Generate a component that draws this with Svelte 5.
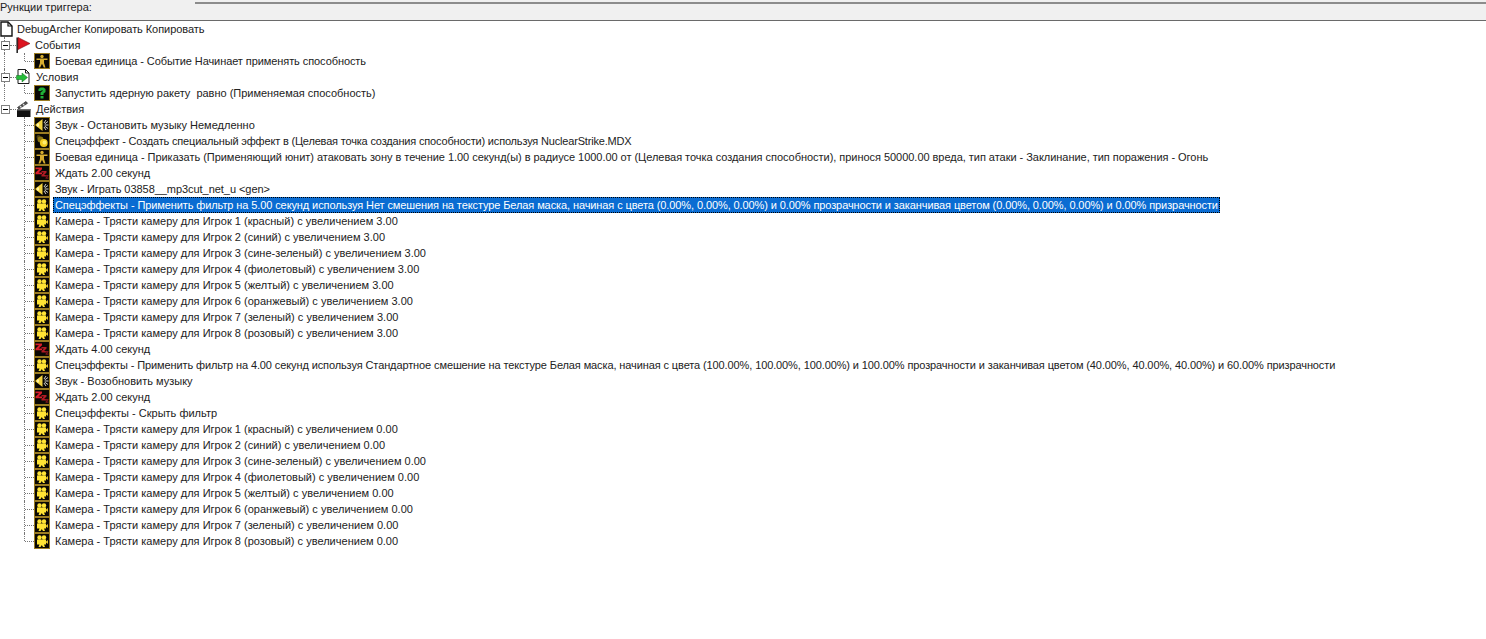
<script>
  const players = ['1 (красный)', '2 (синий)', '3 (сине-зеленый)', '4 (фиолетовый)', '5 (желтый)', '6 (оранжевый)', '7 (зеленый)', '8 (розовый)'];

  const shake = (amount) =>
    players.map((p) => ({
      icon: 'film',
      tight: 'plus',
      text: `Камера - Трясти камеру для Игрок ${p} с увеличением ${amount}`
    }));

  const actions = [
    { icon: 'sound', text: 'Звук - Остановить музыку Немедленно' },
    { icon: 'fx', text: 'Спецэффект - Создать специальный эффект в (Целевая точка создания способности) используя NuclearStrike.MDX', tight: 'max' },
    { icon: 'unit', text: 'Боевая единица - Приказать (Применяющий юнит) атаковать зону в течение 1.00 секунд(ы) в радиусе 1000.00 от (Целевая точка создания способности), принося 50000.00 вреда, тип атаки - Заклинание, тип поражения - Огонь', tight: 'low' },
    { icon: 'wait', text: 'Ждать 2.00 секунд' },
    { icon: 'sound', text: 'Звук - Играть 03858__mp3cut_net_u <gen>', tight: 'soft' },
    { icon: 'film', selected: true, tight: 'sel', text: 'Спецэффекты - Применить фильтр на 5.00 секунд используя Нет смешения на текстуре Белая маска, начиная с цвета (0.00%, 0.00%, 0.00%) и 0.00% прозрачности и заканчивая цветом (0.00%, 0.00%, 0.00%) и 0.00% призрачности' },
    ...shake('3.00'),
    { icon: 'wait', text: 'Ждать 4.00 секунд' },
    { icon: 'film', tight: 'high', text: 'Спецэффекты - Применить фильтр на 4.00 секунд используя Стандартное смешение на текстуре Белая маска, начиная с цвета (100.00%, 100.00%, 100.00%) и 100.00% прозрачности и заканчивая цветом (40.00%, 40.00%, 40.00%) и 60.00% призрачности' },
    { icon: 'sound', text: 'Звук - Возобновить музыку' },
    { icon: 'wait', text: 'Ждать 2.00 секунд' },
    { icon: 'film', text: 'Спецэффекты - Скрыть фильтр' },
    ...shake('0.00')
  ];

  const groups = [
    { label: 'События', icon: 'flag', items: [{ icon: 'unit', text: 'Боевая единица - Событие Начинает применять способность', tight: 'mid' }] },
    { label: 'Условия', icon: 'cond', nudge: true, items: [{ icon: 'quest', text: 'Запустить ядерную ракету  равно (Применяемая способность)', tight: 'faint' }] },
    { label: 'Действия', icon: 'clap', nudge: true, items: actions }
  ];
</script>

{#snippet glyph(name)}
  <svg class="icon" width="16" height="16" viewBox="0 0 16 16">
    <rect x="0.5" y="0.5" width="15" height="15" fill="#0a0804" stroke="#9a7c22" />
    {#if name === 'film'}
      <circle cx="5.500" cy="4.500" r="2.200" fill="#ffe435" />
      <circle cx="10" cy="4.500" r="2.200" fill="#ffe435" />
      <path d="M3 6.500h9v5H10l1 2.500H9L7.800 12 6.500 14H4.500l1-2.500H3z" fill="#ffe435" />
      <path d="M12 8.500l2-1.500v4l-2-1.500z" fill="#e2c22a" />
    {:else if name === 'sound'}
      <path d="M1.500 7.500L8.500 2v12L1.500 8.500z" fill="#f2d23e" />
      <path d="M3 6.500h2v3H3z" fill="#fff2a0" />
      <path d="M10 6l2-3M10.500 7l3.500-2.500M11 8h3.500M10.500 9l3.500 2.500M10 10l2 3" stroke="#e8e8e0" stroke-width="0.900" fill="none" />
    {:else if name === 'unit'}
      <circle cx="8" cy="3.500" r="1.700" fill="#d8ae30" />
      <path d="M2.500 5.500h11v1.500H10v3l1.500 4.500H9.800L8 10.800 6.200 14.500H4.500L6 10V7H2.500z" fill="#d8ae30" />
    {:else if name === 'quest'}
      <path d="M4.500 6V4l2-1.500h3L11.500 4v3L9.500 8.500V10h-3V7.500L8.500 6V5h-1v1z" fill="#20b038" />
      <rect x="6.500" y="11" width="3" height="2.500" fill="#20b038" />
    {:else if name === 'wait'}
      <path d="M1.500 2.500h6.500v1.800L4.500 7.500H8V9.200H1.500V7.500L5 4.300H1.500z" fill="#d81f2b" />
      <path d="M7.500 6h5v1.500L10 10h2.500v1.500h-5V10L10 7.500H7.500z" fill="#b01a24" />
      <path d="M11.500 10h3v1l-1.500 1.500h1.500v1.200h-3v-1l1.500-1.500h-1.500z" fill="#7c141c" />
    {:else if name === 'fx'}
      <circle cx="4.500" cy="4" r="2" fill="#4e4210" />
      <circle cx="6.500" cy="6.500" r="3" fill="#8c7612" />
      <circle cx="9.800" cy="10" r="3.900" fill="#f4cc22" />
      <circle cx="10.500" cy="9.500" r="2" fill="#ffec70" />
    {/if}
  </svg>
{/snippet}

{#snippet groupIcon(name)}
  <svg class="icon" width="16" height="16" viewBox="0 0 16 16">
    {#if name === 'flag'}
      <path d="M1.200 0.500v15.500" stroke="#2a2a2a" stroke-width="1.600" />
      <path d="M2 0.500L14 6.500 2 12.500z" fill="#dc1420" stroke="#7a0c12" stroke-width="0.600" />
    {:else if name === 'cond'}
      <path d="M2 0.500h7.500L13 4v10.500H2z" fill="#fff" stroke="#1a1a1a" />
      <path d="M9.500 0.500V4H13" fill="none" stroke="#1a1a1a" />
      <path d="M0.500 6.500H6V4L11.500 8.500 6 13v-2.500H0.500z" fill="#26bc3a" stroke="#0c6a1a" stroke-width="0.500" />
    {:else if name === 'clap'}
      <path d="M1.500 6.500L10 0.500l1.500 1.800L3 8z" fill="#555" stroke="#111" stroke-width="0.600" />
      <path d="M4 5l1.500 1.500M7 3l1.500 1.500" stroke="#ddd" stroke-width="1.100" />
      <rect x="1" y="8" width="13.500" height="8" fill="#121212" />
      <rect x="1" y="8" width="13.500" height="1.500" fill="#6e6e6e" />
    {/if}
  </svg>
{/snippet}

<main class="panel">
  <header class="bar">
    <span class="title">Рункции триггера:</span>
    <span class="rule"></span>
  </header>

  <div class="tree">
    <div class="row root">
      <svg class="doc" width="13" height="16" viewBox="0 0 13 16">
        <path d="M1 1h7L12 5v10H1z" fill="#fff" stroke="#111" stroke-width="1.400" />
        <path d="M8 1v4h4" fill="none" stroke="#111" stroke-width="1.200" />
      </svg>
      <span class="label root-label">DebugArcher Копировать Копировать</span>
    </div>

    {#each groups as group, g}
      <div class="row">
        <span class="trunk" class:last={g === groups.length - 1}><span class="box"></span></span>
        <span class="tick"></span>
        {@render groupIcon(group.icon)}
        <span class="label group-label" class:nudge={group.nudge}>{group.label}</span>
      </div>
      {#each group.items as item, i}
        <div class="row">
          <span class="trunk" class:empty={g === groups.length - 1}></span>
          <span class="branch" class:end={i === group.items.length - 1}></span>
          {@render glyph(item.icon)}
          <span
            class="label item {item.tight ?? ''}"
            class:selected={item.selected}
          >{item.text}</span>
        </div>
      {/each}
    {/each}
  </div>
</main>

<style>
  :global(body) {
    background: #fff;
  }

  .panel {
    width: 1486px;
    height: 639px;
    overflow: hidden;
    font-family: "Liberation Sans", Arial, sans-serif;
    font-size: 11px;
    color: #222;
    background: #fff;
  }

  .bar {
    display: flex;
    height: 21px;
    box-sizing: border-box;
    background: #f0f0f0;
    border-bottom: 1px solid #6a6a6a;
  }

  .title {
    padding-top: 1px;
    white-space: nowrap;
    width: 195px;
  }

  .rule {
    flex: 1;
    height: 2px;
    margin-top: 2px;
    background: #8c8c8c;
  }

  .row {
    display: flex;
    align-items: center;
    height: 16px;
    white-space: pre;
  }

  .doc {
    flex: none;
    margin-right: 4px;
  }

  .label {
    line-height: 16px;
  }

  .root-label {
    letter-spacing: -0.06px;
  }

  .group-label {
    margin-left: 3px;
  }

  .group-label.nudge {
    margin-left: 4px;
  }

  .item {
    margin-left: 3px;
    padding: 0 2px;
  }

  .plus {
    letter-spacing: 0.015px;
  }

  .faint {
    letter-spacing: -0.015px;
  }

  .low {
    letter-spacing: -0.035px;
  }

  .soft {
    letter-spacing: -0.05px;
  }

  .mid {
    letter-spacing: -0.08px;
  }

  .sel {
    letter-spacing: -0.1px;
  }

  .high {
    letter-spacing: -0.11px;
  }

  .max {
    letter-spacing: -0.18px;
  }

  .selected {
    height: 16px;
    color: #fff;
    background: #0a6cd2;
    outline: 1px dotted #000;
    outline-offset: -1px;
  }

  .trunk {
    position: relative;
    align-self: stretch;
    width: 5px;
    margin-left: 4px;
    border-left: 1px dotted #777;
    flex: none;
  }

  .trunk.last,
  .trunk.empty {
    border-left-color: transparent;
  }

  .box {
    position: absolute;
    left: -4px;
    top: 4px;
    width: 9px;
    height: 9px;
    box-sizing: border-box;
    border: 1px solid #808080;
    background: linear-gradient(#000, #000) center / 5px 1px no-repeat #fff;
  }

  .tick {
    width: 6px;
    border-top: 1px dotted #777;
    flex: none;
  }

  .branch {
    position: relative;
    align-self: stretch;
    width: 9px;
    margin-left: 14px;
    flex: none;
    border-left: 1px dotted #777;
  }

  .branch::after {
    content: "";
    position: absolute;
    left: 0;
    top: 8px;
    width: 9px;
    border-top: 1px dotted #777;
  }

  .branch.end {
    border-left-color: transparent;
  }

  .branch.end::before {
    content: "";
    position: absolute;
    left: -1px;
    top: 0;
    height: 8px;
    border-left: 1px dotted #777;
  }

  .icon {
    flex: none;
    display: block;
  }
</style>
